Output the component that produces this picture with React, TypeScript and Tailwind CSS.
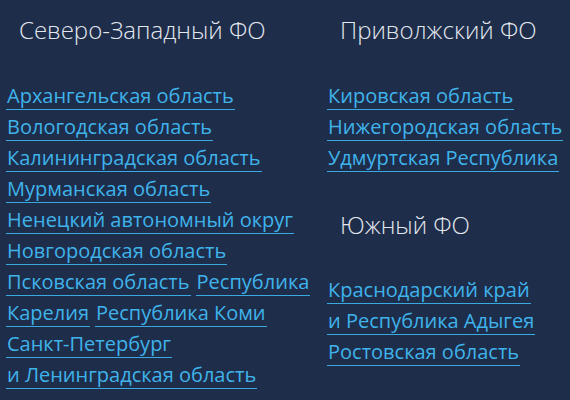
import React from "react";

type Line = string[];

// Each district: a heading and the lines of region links beneath it
const northWest: Line[] = [
  ["Архангельская область"],
  ["Вологодская область"],
  ["Калининградская область"],
  ["Мурманская область"],
  ["Ненецкий автономный округ"],
  ["Новгородская область"],
  ["Псковская область", "Республика"],
  ["Карелия", "Республика Коми"],
  ["Санкт-Петербург"],
  ["и Ленинградская область"],
];

const volga: Line[] = [
  ["Кировская область"],
  ["Нижегородская область"],
  ["Удмуртская Республика"],
];

const south: Line[] = [
  ["Краснодарский край"],
  ["и Республика Адыгея"],
  ["Ростовская область"],
];

function Heading({ title }: { title: string }) {
  return (
    <h2 className="pl-[13px] text-[24px] leading-[30px] font-light text-[#e3e8ef]">
      {title}
    </h2>
  );
}

function Links({ lines }: { lines: Line[] }) {
  return (
    <div className="flex flex-col">
      {lines.map((line, i) => (
        <div key={i} className="flex h-[31px] gap-[5px] text-[20px] leading-[31px]">
          {line.map((item) => (
            <a
              key={item}
              href="#"
              className="h-[30px] border-b border-[#3aa9e0] px-px text-[#3fb3ea] whitespace-nowrap"
            >
              {item}
            </a>
          ))}
        </div>
      ))}
    </div>
  );
}

export default function App() {
  return (
    <div
      className="flex h-[400px] w-[570px] overflow-hidden bg-[#1e2d4a] pl-[6px] pt-[15px]"
      style={{ fontFamily: '"Open Sans", "Noto Sans", sans-serif' }}
    >
      {/* Северо-Западный ФО */}
      <div className="flex w-[321px] shrink-0 flex-col">
        <Heading title="Северо-Западный ФО" />
        <div className="mt-[35px]">
          <Links lines={northWest} />
        </div>
      </div>

      {/* Приволжский и Южный ФО */}
      <div className="flex flex-col">
        <Heading title="Приволжский ФО" />
        <div className="mt-[35px]">
          <Links lines={volga} />
        </div>
        <div className="mt-[37px]">
          <Heading title="Южный ФО" />
        </div>
        <div className="mt-[34px]">
          <Links lines={south} />
        </div>
      </div>
    </div>
  );
}
